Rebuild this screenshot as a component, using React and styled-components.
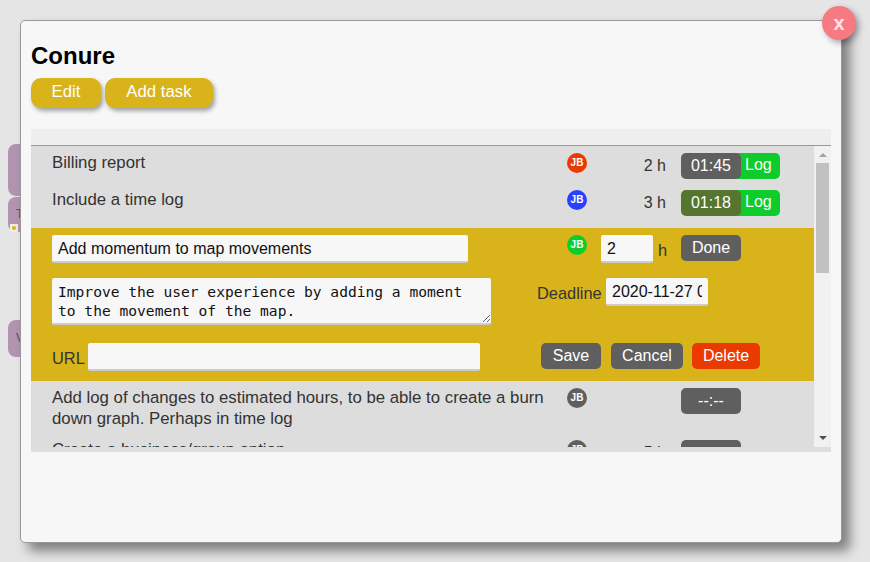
import React from 'react'
import styled, { createGlobalStyle } from 'styled-components'

const Global = createGlobalStyle`
  html, body {
    margin: 0;
    height: 100%;
    overflow: hidden;
    background: #e5e5e5;
    font-family: "Liberation Sans", Arial, sans-serif;
    font-size: 16.8px;
    color: #333;
  }
`

const Page = styled.div`
  position: relative;
  width: 870px;
  height: 562px;
  padding: 20px 28px 19px 20px;
  box-sizing: border-box;
`

const BehindTab = styled.div`
  position: absolute;
  left: 8px;
  top: ${p => p.$top}px;
  width: 30px;
  height: ${p => p.$height}px;
  background: #b294b0;
  border-radius: 8px;
  color: #5f4a5e;
  font-size: 12px;
  line-height: ${p => p.$textAt}px;
  padding-left: 8px;
  box-sizing: border-box;
`

const TabMark = styled.div`
  position: absolute;
  left: 2px;
  bottom: 0;
  width: 8px;
  height: 8px;
  background: #f0ece2;
  display: flex;
  align-items: center;
  justify-content: center;

  &::after {
    content: '';
    width: 4px;
    height: 4px;
    border-radius: 50%;
    background: #d9b31a;
  }
`

const Modal = styled.div`
  position: relative;
  height: 100%;
  box-sizing: border-box;
  background: #f7f7f7;
  border: 1px solid #999;
  border-radius: 5px;
  box-shadow: 8px 8px 12px rgba(0, 0, 0, 0.45);
  padding: 21px 10px 0;
`

const Close = styled.div`
  position: absolute;
  top: -15px;
  right: -15px;
  width: 34px;
  height: 34px;
  border-radius: 50%;
  background: #f67a82;
  color: #ffe4e4;
  font-size: 20px;
  font-weight: bold;
  line-height: 34px;
  text-align: center;
  box-shadow: 3px 3px 6px rgba(0, 0, 0, 0.35);
`

const Title = styled.h1`
  margin: 0;
  height: 36px;
  font-size: 24px;
  line-height: 27px;
  font-weight: bold;
  color: #000;
`

const Actions = styled.div`
  display: flex;
  gap: 4px;
  margin-bottom: 21px;
`

const ActionButton = styled.div`
  width: ${p => p.$width}px;
  height: 30px;
  line-height: 27px;
  text-align: center;
  background: #d9b31a;
  color: #fff;
  border-radius: 10px;
  box-shadow: 2px 3px 4px rgba(0, 0, 0, 0.35);
`

const Board = styled.div`
  width: 800px;
  height: 323px;
  background: #ddd;
  display: flex;
  flex-direction: column;
`

const BoardHead = styled.div`
  height: 16px;
  flex: none;
  background: #eee;
  border-bottom: 1px solid #999;
`

const BoardBody = styled.div`
  display: flex;
  height: 301px;
  flex: none;
`

const List = styled.div`
  width: 783px;
  overflow: hidden;
`

const Row = styled.div`
  display: grid;
  grid-template-columns: 515px 20px 80px 60px 39px;
  padding: ${p => p.$top ?? 7}px 0 ${p => p.$bottom ?? 4}px 21px;
  align-items: start;
`

const TaskText = styled.div`
  line-height: 21px;
  padding-right: 16px;
  margin-top: -1px;
`

const Avatar = styled.div`
  flex: none;
  width: 20px;
  height: 20px;
  margin-left: ${p => p.$left ?? 0}px;
  border-radius: 50%;
  background: ${p => p.$color};
  color: #fff;
  font-size: 10px;
  font-weight: bold;
  line-height: 19px;
  text-align: center;
`

const Hours = styled.div`
  line-height: 26px;
  font-size: 16px;
  text-align: right;
  padding-right: 1px;
`

const Timer = styled.div`
  display: flex;
  grid-column: 4 / span 2;
  margin-left: 14px;
`

const Clock = styled.div`
  position: relative;
  flex: none;
  width: 60px;
  height: 26px;
  line-height: 26px;
  font-size: 16px;
  text-align: center;
  color: #fff;
  background: ${p => p.$color ?? '#5f5f5f'};
  border-radius: 5px;
`

const Log = styled.div`
  flex: none;
  width: 47px;
  margin-left: -8px;
  height: 26px;
  line-height: 24px;
  padding-left: 12px;
  box-sizing: border-box;
  color: #fff;
  background: #0dcc2b;
  border-radius: 5px;
  font-size: 16px;
`

const EditBlock = styled.div`
  margin-top: 8px;
  height: 153px;
  box-sizing: border-box;
  padding: 7px 54px 0 21px;
  background: #d9b31a;
  display: flex;
  flex-direction: column;
`

const EditRow = styled.div`
  display: flex;
  align-items: flex-start;
  height: ${p => p.$height}px;
`

const Field = styled.input`
  flex: none;
  box-sizing: border-box;
  width: ${p => p.$width}px;
  height: 28px;
  margin-left: ${p => p.$left ?? 0}px;
  padding: 1px 6px 0;
  border: 0;
  border-bottom: 2px solid #ccc;
  border-radius: 2px;
  background: #f7f7f7;
  color: #111;
  font-family: "Liberation Sans", Arial, sans-serif;
  font-size: 16px;
  outline: none;
`

const Notes = styled.textarea`
  flex: none;
  box-sizing: border-box;
  width: 439px;
  height: 47px;
  padding: 4px 6px 0;
  border: 0;
  border-bottom: 2px solid #ccc;
  border-radius: 2px;
  background: #f7f7f7;
  color: #111;
  font-family: "DejaVu Sans Mono", monospace;
  font-size: 14.6px;
  line-height: 19px;
  overflow: hidden;
  outline: none;
`

const Label = styled.label`
  flex: none;
  width: ${p => p.$width}px;
  font-size: 16.4px;
  line-height: 30px;
  margin-left: ${p => p.$left ?? 0}px;
  white-space: nowrap;
`

const Small = styled.button`
  flex: none;
  box-sizing: border-box;
  width: ${p => p.$width}px;
  height: 26px;
  margin-left: ${p => p.$left ?? 0}px;
  padding: 0;
  border: 0;
  border-radius: 5px;
  background: ${p => p.$color ?? '#5f5f5f'};
  color: #fff;
  font-family: "Liberation Sans", Arial, sans-serif;
  font-size: 16px;
`

const Track = styled.div`
  width: 17px;
  background: #f1f1f1;
  display: flex;
  flex-direction: column;
  align-items: center;
`

const Arrow = styled.div`
  flex: none;
  width: 0;
  height: 0;
  margin: ${p => (p.$down ? '0 0 7px' : '7px 0 6px')};
  border-left: 4px solid transparent;
  border-right: 4px solid transparent;
  border-${p => (p.$down ? 'top' : 'bottom')}: 4px solid ${p => (p.$down ? '#505050' : '#a3a3a3')};
`

const Thumb = styled.div`
  flex: none;
  width: 13px;
  height: 110px;
  background: #c1c1c1;
`

const Spacer = styled.div`
  flex: 1;
`

function TaskRow({ text, color, hours, clock, clockColor, log, top, bottom }) {
  return (
    <Row $top={top} $bottom={bottom}>
      <TaskText>{text}</TaskText>
      <Avatar $color={color}>JB</Avatar>
      <Hours>{hours}</Hours>
      <Timer>
        <Clock $color={clockColor}>{clock}</Clock>
        {log && <Log>Log</Log>}
      </Timer>
    </Row>
  )
}

export default function App() {
  return (
    <Page>
      <Global />
      <BehindTab $top={144} $height={52} />
      <BehindTab $top={197} $height={35} $textAt={34}>
        T
        <TabMark />
      </BehindTab>
      <BehindTab $top={320} $height={37} $textAt={37}>V</BehindTab>
      <Modal>
        <Close>x</Close>
        <Title>Conure</Title>
        <Actions>
          <ActionButton $width={70}>Edit</ActionButton>
          <ActionButton $width={108}>Add task</ActionButton>
        </Actions>
        <Board>
          <BoardHead />
          <BoardBody>
            <List>
              <TaskRow text="Billing report" color="#ea3a00" hours="2 h" clock="01:45" log />
              <TaskRow text="Include a time log" color="#2b3fff" hours="3 h" clock="01:18" clockColor="#56752f" log />
              <EditBlock>
                <EditRow $height={43}>
                  <Field $width={416} defaultValue="Add momentum to map movements" />
                  <Avatar $color="#0dcc2b" $left={99}>JB</Avatar>
                  <Field $width={52} $left={14} defaultValue="2" />
                  <Label $left={5} $width={8}>h</Label>
                  <Small $width={60} $left={15}>Done</Small>
                </EditRow>
                <EditRow $height={65}>
                  <Notes defaultValue="Improve the user experience by adding a moment to the movement of the map." />
                  <Label $left={46} $width={69}>Deadline</Label>
                  <Field $width={102} defaultValue="2020-11-27 00:00" />
                </EditRow>
                <EditRow $height={38}>
                  <Label $width={36}>URL</Label>
                  <Field $width={392} />
                  <Small $width={60} $left={61}>Save</Small>
                  <Small $width={72} $left={10}>Cancel</Small>
                  <Small $width={68} $left={9} $color="#ea3a00">Delete</Small>
                </EditRow>
              </EditBlock>
              <TaskRow
                text="Add log of changes to estimated hours, to be able to create a burn down graph. Perhaps in time log"
                color="#5f5f5f"
                clock="--:--"
                hours=""
                bottom={0}
              />
              <TaskRow text="Create a business/group option" color="#5f5f5f" hours="5 h" clock="--:--" top={11} />
            </List>
            <Track>
              <Arrow />
              <Thumb />
              <Spacer />
              <Arrow $down />
            </Track>
          </BoardBody>
        </Board>
      </Modal>
    </Page>
  )
}
